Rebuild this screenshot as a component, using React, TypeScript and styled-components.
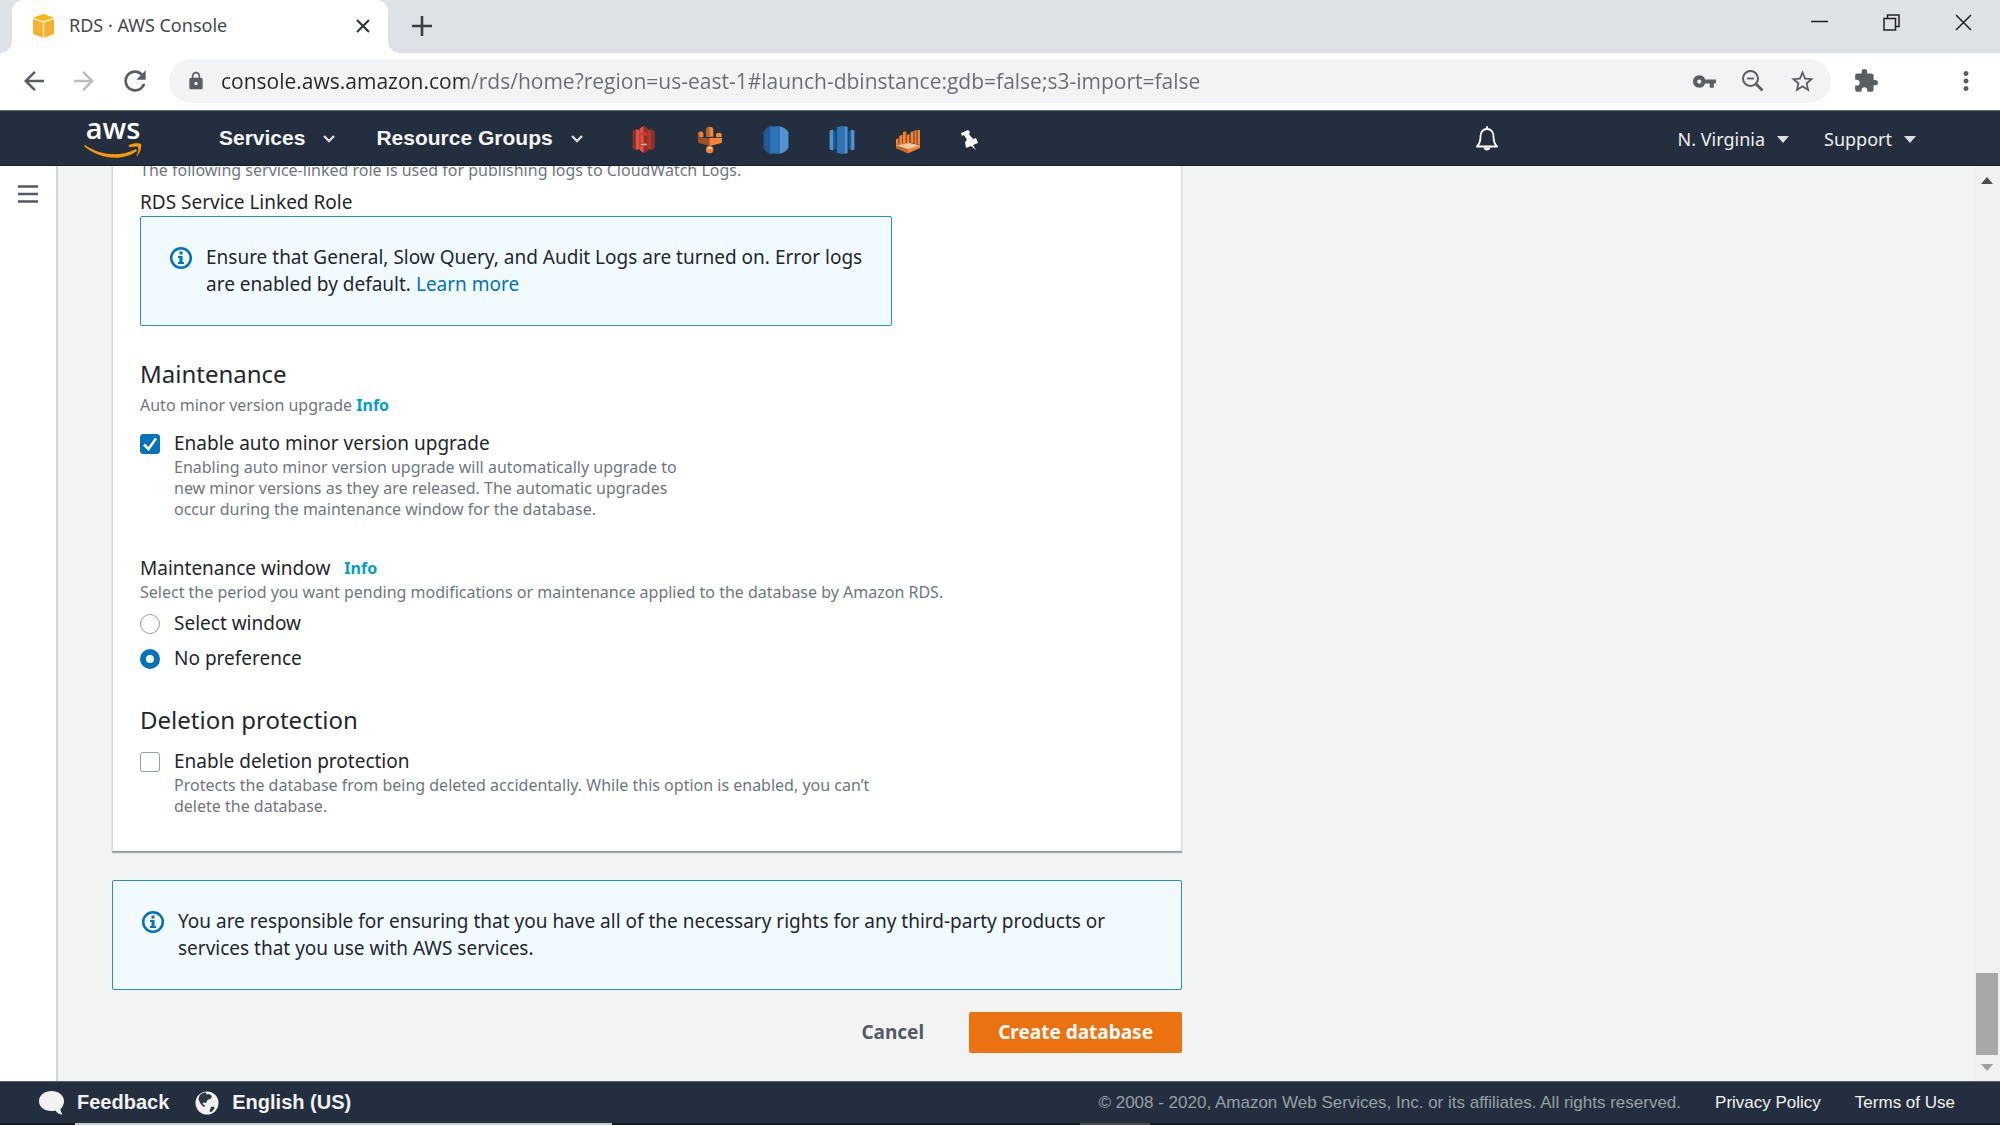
import React, { useState } from "react";
import styled, { createGlobalStyle, css } from "styled-components";
import {
  MdArrowBack,
  MdArrowForward,
  MdExtension,
  MdLock,
  MdMoreVert,
  MdRefresh,
  MdStarBorder,
  MdVpnKey,
} from "react-icons/md";

const ember = `"Noto Sans", "Open Sans", sans-serif`;
const chrome = `"Open Sans", "Noto Sans", sans-serif`;
const arial = `"Liberation Sans", Arial, sans-serif`;

const GlobalStyle = createGlobalStyle`
  *, *::before, *::after { box-sizing: border-box; }
  body {
    margin: 0;
    font-family: ${ember};
    font-size: 19px;
    line-height: 27px;
    color: #24272d;
    background: #f2f3f3;
  }
  h2, p { margin: 0; font-weight: 400; }
  button { border: 0; padding: 0; background: none; font: inherit; color: inherit; cursor: pointer; }
  a { text-decoration: none; color: inherit; }
  svg { display: block; flex: none; }
`;

const Screen = styled.div`
  height: 100vh;
  display: flex;
  flex-direction: column;
  overflow: hidden;
`;

/* ---------- browser chrome ---------- */

const TabStrip = styled.div`
  display: flex;
  align-items: stretch;
  height: 53px;
  padding-left: 12px;
  background: #dee1e6;
  flex: none;
`;

const Tab = styled.div`
  position: relative;
  display: flex;
  align-items: center;
  width: 376px;
  padding: 0 18px 2px 20px;
  gap: 14px;
  border-radius: 12px 12px 0 0;
  background: #fff;
  color: #45494d;
  font-size: 18px;

  &::before,
  &::after {
    content: "";
    position: absolute;
    bottom: 0;
    width: 12px;
    height: 12px;
  }
  &::before {
    right: 100%;
    background: radial-gradient(circle at 0 0, transparent 12px, #fff 12px);
  }
  &::after {
    left: 100%;
    background: radial-gradient(circle at 100% 0, transparent 12px, #fff 12px);
  }
`;

const TabTitle = styled.span`
  flex: 1;
  white-space: nowrap;
`;

const NewTab = styled.button`
  margin-left: 24px;
  padding-bottom: 2px;
`;

const WindowButtons = styled.div`
  display: flex;
  align-items: flex-start;
  gap: 55px;
  margin-left: auto;
  padding: 14px 28px 0 0;
`;

const Toolbar = styled.div`
  display: flex;
  align-items: center;
  height: 57px;
  padding: 0 19px 1px 19px;
  background: #fff;
  color: #5a5e63;
  flex: none;
`;

const ToolButton = styled.button<{ $faded?: boolean }>`
  width: 30px;
  margin-right: 20px;
  color: ${(p) => (p.$faded ? "#bbbdbf" : "inherit")};
`;

const Omnibox = styled.div`
  display: flex;
  align-items: center;
  flex: 1;
  height: 44px;
  margin-right: 22px;
  padding: 0 15px 0 17px;
  border-radius: 22px;
  background: #f1f3f4;
`;

const Address = styled.input`
  flex: 1;
  min-width: 0;
  margin: 0 16px 0 15px;
  padding: 0;
  border: 0;
  outline: 0;
  font-family: ${chrome};
  font-size: 21px;
  line-height: 30px;
  color: transparent;
  background: linear-gradient(to right, #25272b 244px, #696d72 244px);
  -webkit-background-clip: text;
  background-clip: text;
`;

const OmniActions = styled.div`
  display: flex;
  align-items: center;
  gap: 24px;
`;

const MenuButton = styled.button`
  margin-left: 72px;
`;

/* ---------- console navigation ---------- */

const Nav = styled.header`
  display: flex;
  align-items: center;
  height: 56px;
  padding: 0 84px;
  background: #232f3e;
  border-top: 1px solid #67727c;
  border-bottom: 1px solid #16202e;
  color: #fff;
  flex: none;
`;

const NavMenu = styled.button<{ $light?: boolean }>`
  display: flex;
  align-items: center;
  gap: ${(p) => (p.$light ? "12px" : "18px")};
  font-family: ${(p) => (p.$light ? ember : arial)};
  font-size: ${(p) => (p.$light ? "18px" : "21px")};
  font-weight: ${(p) => (p.$light ? 400 : 700)};
  color: ${(p) => (p.$light ? "#eee" : "#f5f5f5")};
  white-space: nowrap;
`;

const MainMenus = styled.nav`
  display: flex;
  gap: 41px;
  margin-left: 77px;
  padding-bottom: 2px;

  svg { margin-top: 4px; }
`;

const Shortcuts = styled.div`
  display: flex;
  align-items: center;
  gap: 40px;
  margin-left: 48px;
  padding-top: 3px;
`;

const Account = styled.div`
  display: flex;
  align-items: center;
  gap: 35px;
  margin-left: 179px;
  padding-top: 3px;
`;

const BellButton = styled.button`
  margin-left: auto;
  padding-top: 2px;
`;

/* ---------- page ---------- */

const Body = styled.div`
  display: flex;
  flex: 1;
  min-height: 0;
`;

const Rail = styled.aside`
  flex: none;
  width: 58px;
  padding: 19px 0 0 18px;
  background: #fff;
  border-right: 2px solid #d2d6d6;
`;

const RailButton = styled.button`
  display: block;
`;

const Main = styled.main`
  display: flex;
  flex-direction: column;
  justify-content: flex-end;
  flex: 1;
  min-width: 0;
  overflow: hidden;
  padding: 0 54px 28px;
`;

const Column = styled.div`
  width: 100%;
  max-width: 1070px;
`;

const Panel = styled.section`
  padding: 28px 27px 34px;
  margin-bottom: 28px;
  background: #fff;
  border: 1px solid #d5dbdb;
  border-bottom-color: #879596;
  box-shadow: 0 1px 1px rgba(0, 28, 36, 0.3);
`;

const Heading = styled.h2`
  font-size: 24px;
  line-height: 32px;
`;

const Hint = styled.p<{ $width?: number }>`
  max-width: ${(p) => (p.$width ? `${p.$width}px` : "none")};
  font-size: 16px;
  line-height: 21px;
  color: #6f777e;
`;

const Stack = styled.div<{ $gap?: number; $top?: number }>`
  display: flex;
  flex-direction: column;
  gap: ${(p) => p.$gap ?? 0}px;
  margin-top: ${(p) => p.$top ?? 0}px;
`;

const InfoLink = styled.button`
  font-size: 16px;
  font-weight: 700;
  line-height: 21px;
  color: #00a1c9;
`;

const FieldTitle = styled.div`
  display: flex;
  align-items: center;
  gap: 14px;
`;

const Choice = styled.div`
  display: grid;
  grid-template-columns: 20px 1fr;
  column-gap: 14px;
  align-items: center;

  ${Hint} { grid-column: 2; }
`;

const control = css`
  appearance: none;
  width: 20px;
  height: 20px;
  margin: 0;
  border: 1px solid #95a0a1;
  background: #fff;
`;

const Checkbox = styled.input`
  ${control}
  border-radius: 3px;
  &:checked {
    border-color: #0073bb;
    background: #0073bb;
  }
`;

const CheckCell = styled.span`
  display: grid;
  > * { grid-area: 1 / 1; }
  svg { pointer-events: none; }
`;

const Radio = styled.input`
  ${control}
  border-radius: 50%;
  &:checked { border: 6px solid #0073bb; }
`;

const AlertBox = styled.div<{ $width?: number }>`
  display: flex;
  align-items: flex-start;
  gap: 13px;
  max-width: ${(p) => (p.$width ? `${p.$width}px` : "none")};
  padding: 27px 28px;
  border: 1px solid #2e8bc7;
  border-radius: 2px;
  background: #f1faff;

  svg { margin-top: 2px; }
  a { color: #0073bb; }
`;

const Actions = styled.div`
  display: flex;
  justify-content: flex-end;
  gap: 16px;
  margin-top: 22px;
`;

const Action = styled.button<{ $primary?: boolean }>`
  height: 41px;
  padding: 0 29px;
  border-radius: 2px;
  font-weight: 700;
  color: ${(p) => (p.$primary ? "#fff" : "#545b64")};
  background: ${(p) => (p.$primary ? "#ec7211" : "transparent")};
`;

const Scrollbar = styled.div`
  display: flex;
  flex-direction: column;
  align-items: center;
  justify-content: space-between;
  flex: none;
  width: 26px;
  padding: 11px 0 10px;
  background: #f1f1f1;
`;

const ThumbEnd = styled.div`
  display: flex;
  flex-direction: column;
  align-items: center;
  gap: 9px;
`;

const Thumb = styled.div`
  width: 22px;
  height: 82px;
  background: #a8a8a8;
`;

/* ---------- footer ---------- */

const Footer = styled.footer`
  display: flex;
  align-items: center;
  flex: none;
  height: 42px;
  padding: 0 45px 0 39px;
  background: #232f3e;
  border-top: 1px solid #56616c;
  font-family: ${arial};
  font-size: 17px;
  color: #f2f2f2;
  white-space: nowrap;
`;

const FooterButton = styled.button`
  display: flex;
  align-items: center;
  gap: 13px;
  margin-right: 26px;
  font-size: 20px;
  font-weight: 700;
`;

const Legal = styled.div`
  display: flex;
  gap: 34px;
  margin-left: auto;
`;

const Copyright = styled.span`
  color: #95a0a6;
`;

const Taskbar = styled.div`
  display: flex;
  flex: none;
  height: 2px;
  padding-left: 75px;
  gap: 468px;
  background: #16191d;
`;

const TaskSegment = styled.div<{ $bright?: boolean }>`
  width: ${(p) => (p.$bright ? "537px" : "70px")};
  background: ${(p) => (p.$bright ? "#c9c9c9" : "#4a4b4e")};
`;

/* ---------- drawings ---------- */

const Favicon = () => (
  <svg width="23" height="24" viewBox="0 0 23 24">
    <path d="M1 4 11.500 0 22 4v16l-10.500 4L1 20z" fill="#f5b32d" />
    <path d="M1 4 11.500 0 22 4 11.500 8z" fill="#f9b813" />
    <path d="M1 4.500 11.500 8 22 4.500M11.500 8v16" stroke="#fdeccb" strokeWidth="1.400" fill="none" />
  </svg>
);

const Strokes = ({ size, d, width = 1.5, color = "#222" }: { size: number; d: string; width?: number; color?: string }) => (
  <svg width={size} height={size} viewBox={`0 0 ${size} ${size}`} fill="none" stroke={color} strokeWidth={width}>
    <path d={d} />
  </svg>
);

const ZoomOutIcon = () => (
  <svg width="24" height="24" viewBox="0 0 24 24" fill="none" stroke="currentColor">
    <circle cx="9.500" cy="9.500" r="7.500" strokeWidth="2" />
    <path d="M15 15l6.500 6.500" strokeWidth="2.800" />
    <path d="M6 9.500h7" strokeWidth="1.800" />
  </svg>
);

const AwsLogo = () => (
  <svg width="58" height="42" viewBox="0 -4 58 42" role="img" aria-label="AWS" overflow="visible">
    <text x="29" y="18" textAnchor="middle" fontFamily="Open Sans" fontSize="29" fontWeight="600" fill="#fff">
      aws
    </text>
    <path d="M1 24c16 11 36 12 51 4l1 2C38 41 15 38 0 25z" fill="#f90" />
    <path d="M45 24c4-2 10-2 12-1 1 3-1 9-4 12-1 0-1 0 0-1 1-3 2-6 1-8-2-1-5 0-8 0-1 0-2-1-1-2z" fill="#f90" />
  </svg>
);

const Chevron = () => (
  <svg width="12" height="8" viewBox="0 0 12 8">
    <path d="M1 1l5 5 5-5" fill="none" stroke="#ddd" strokeWidth="2.400" />
  </svg>
);

const Caret = ({ up, color = "#ddd" }: { up?: boolean; color?: string }) => (
  <svg width="12" height="7" viewBox="0 0 12 7">
    <path d={up ? "M0 7 6 0l6 7z" : "M0 0h12L6 7z"} fill={color} />
  </svg>
);

const Bell = () => (
  <svg width="24" height="26" viewBox="0 0 24 26" fill="none" stroke="#fff" strokeWidth="1.800">
    <path d="M2 20.500h20c-3-3-3.500-5-3.500-10C18.500 6 16 3 12 3s-6.500 3-6.500 7.500c0 5-.5 7-3.500 10z" strokeLinejoin="round" />
    <path d="M12 3V1" strokeLinecap="round" />
    <path d="M8.500 21.500c.5 4 6.500 4 7 0z" fill="#fff" stroke="none" />
  </svg>
);

const BucketIcon = () => (
  <svg width="26" height="28" viewBox="32 47 78 86">
    <path d="M36 62l10-5v64l-10-5z" fill="#8c3123" />
    <path d="M104 62l-10-5v64l10-5z" fill="#8c3123" />
    <path d="M46 57l12 3v58l-12 3z" fill="#e05243" />
    <path d="M94 57l-12 3v58l12 3z" fill="#b0392b" />
    <path d="M58 54l12-6 12 6v68l-12 7-12-7z" fill="#c43d2f" />
    <path d="M58 54l12-6v18l-12 2zM58 110l12-2v21l-12-7z" fill="#e05243" />
    <path d="M70 48l12 6v14l-12-2zM70 108l12 2v12l-12 7z" fill="#8c3123" />
    <path d="M60 76l10-1v24l-10-1z" fill="#e05243" />
    <path d="M70 75l10 1v22l-10 1z" fill="#8c3123" />
    <path d="M58 103l12-2 12 2-12 4z" fill="#f2b0a9" />
  </svg>
);

const MapIcon = () => (
  <svg width="26" height="28" viewBox="228 48 78 84">
    <path d="M231 84h72v14l-37 10-35-10z" fill="#9d5025" />
    <path d="M266 84h37v14l-37 10z" fill="#f58534" />
    <path d="M231 68c4-5 12-5 16 0v14h-16zM285 71c4-4 13-4 17 0v11h-17z" fill="#f58534" />
    <path d="M256 57c4-9 18-9 21 0v23h-21z" fill="#f58534" />
    <path d="M256 57c2-4 5-6 10-7v30h-10zM231 68l5-3v17h-5z" fill="#b8622c" />
    <circle cx="266" cy="119" r="11" fill="#f58534" />
    <path d="M256 114c5-5 15-5 20 0l-10 4z" fill="#fbc79c" />
  </svg>
);

const DatabaseIcon = () => (
  <svg width="26" height="28" viewBox="428 47 78 86">
    <path d="M429 66c5-10 12-16 19-18v84c-9-3-15-9-19-18z" fill="#1f5b98" />
    <path d="M448 48h31v84h-31z" fill="#2e73b8" />
    <path d="M479 48c12 3 20 9 26 18v48c-4 9-14 15-26 18z" fill="#5294cf" />
  </svg>
);

const TableIcon = () => (
  <svg width="26" height="28" viewBox="625 47 78 86">
    <path d="M626 61l11-3v64l-11-3z" fill="#5294cf" />
    <path d="M637 60l8 2v56l-8 2z" fill="#205b99" />
    <path d="M648 50l14-2h11v84h-11l-14-2z" fill="#2e73b8" />
    <path d="M673 48l8 2v80l-8 2z" fill="#5294cf" />
    <path d="M684 62l8-2v60l-8-2z" fill="#205b99" />
    <path d="M692 58l10 3v58l-10 3z" fill="#5294cf" />
  </svg>
);

const StreamIcon = () => (
  <svg width="26" height="28" viewBox="828 50 78 84">
    <path d="M831 110l36 14v8l-36-16z" fill="#9d5025" />
    <path d="M831 108l36-6 36 6v8l-36 16-36-16z" fill="#f58534" />
    <path d="M831 108l36 12v12l-36-16z" fill="#c26a2e" />
    <path d="M831 108l36-8 36 8-36 11z" fill="#fbc79c" />
    <path d="M831 90l8-3v19l-8 1zM841 79l9-3v29l-9 2zM852 69l9-3v37l-9 2zM863 77l9-3v28h-9zM875 68l9-3v38l-9-2zM886 64l7-2v43l-7-2zM895 63l8-2v46l-8-2z" fill="#f58534" />
    <path d="M838 87h3v19h-3zM849 76h3v29h-3zM860 66h3v36h-3zM871 74h4v27h-4zM883 65h3v38h-3zM893 62h2v43h-2z" fill="#9d5025" />
  </svg>
);

const PinIcon = () => (
  <svg width="18" height="20" viewBox="0 0 18 20">
    <path d="M0 3 7 0l2 2-1 2 4 5 3-1 2 5-5 2 3 5-5-4-5 2-1-6 2-2-3-5-2 1z" fill="#fff" />
  </svg>
);

const InfoIcon = () => (
  <svg width="24" height="24" viewBox="0 0 24 24">
    <circle cx="12" cy="12" r="9.800" fill="none" stroke="#0073bb" strokeWidth="2.500" />
    <path d="M10.500 5.500h3v3h-3zM9 10h4.500v6H15v2H9v-2h1.500v-4H9z" fill="#0073bb" />
  </svg>
);

const SpeechIcon = () => (
  <svg width="25" height="24" viewBox="0 0 25 24">
    <path d="M12.500 0C19 0 25 4 25 10c0 4-2 6.500-3.500 8 0 2 1 4 2 5.500-3 0-5.500-1.500-7-4C8 21.500 0 17.500 0 10 0 4 6 0 12.500 0z" fill="#f2f2f2" />
  </svg>
);

const GlobeIcon = () => (
  <svg width="24" height="24" viewBox="0 0 24 24">
    <circle cx="12" cy="12" r="11.500" fill="#f2f2f2" />
    <path d="M4.500 4.500C7 2 9 1.500 11 1.500l.5 2 2.500-.5 3 2-1 2.500-3.500 1.500-1.500 3-2.500-.5-1 1.500 2 1 .5 2-2-.5-3-3.500L3.500 8zM16 16l3-.5.5 2-3 3.500-2-.5z" fill="#2f3946" />
  </svg>
);

const MenuIcon = () => (
  <svg width="20" height="18" viewBox="0 0 20 18">
    <path d="M0 1.500h20M0 9h20M0 16.500h20" stroke="#545b64" strokeWidth="2.600" />
  </svg>
);

/* ---------- composition ---------- */

function CheckOption({ id, label, checked, onToggle, hint, width }: {
  id: string; label: string; checked: boolean; onToggle: () => void; hint: string; width: number;
}) {
  return (
    <Choice>
      <CheckCell>
        <Checkbox id={id} type="checkbox" checked={checked} onChange={onToggle} />
        {checked && <Strokes size={20} d="M4 10.500 8.500 15 16 4.500" width={2.6} color="#fff" />}
      </CheckCell>
      <label htmlFor={id}>{label}</label>
      <Hint $width={width}>{hint}</Hint>
    </Choice>
  );
}

export default function App() {
  const [autoUpgrade, setAutoUpgrade] = useState(true);
  const [protect, setProtect] = useState(false);
  const [period, setPeriod] = useState("none");
  const [url, setUrl] = useState(
    "console.aws.amazon.com/rds/home?region=us-east-1#launch-dbinstance:gdb=false;s3-import=false"
  );

  return (
    <Screen>
      <GlobalStyle />
      <TabStrip>
        <Tab>
          <Favicon />
          <TabTitle>RDS · AWS Console</TabTitle>
          <button aria-label="Close tab"><Strokes size={14} d="M1 1l12 12M13 1 1 13" width={2.2} color="#33373b" /></button>
        </Tab>
        <NewTab aria-label="New tab"><Strokes size={20} d="M10 0v20M0 10h20" width={2.6} color="#3b3f43" /></NewTab>
        <WindowButtons>
          <button aria-label="Minimize"><Strokes size={17} d="M0 7.500h17" /></button>
          <button aria-label="Restore"><Strokes size={17} d="M1 4.500h11.500V16H1zM4.500 4.500V1H16v11.500h-3.500" /></button>
          <button aria-label="Close window"><Strokes size={17} d="M1 1l15 15M16 1 1 16" /></button>
        </WindowButtons>
      </TabStrip>

      <Toolbar>
        <ToolButton aria-label="Back"><MdArrowBack size={30} /></ToolButton>
        <ToolButton aria-label="Forward" $faded><MdArrowForward size={30} /></ToolButton>
        <ToolButton aria-label="Reload"><MdRefresh size={32} /></ToolButton>
        <Omnibox>
          <MdLock size={20} />
          <Address aria-label="Address" value={url} onChange={(e) => setUrl(e.target.value)} spellCheck={false} />
          <OmniActions>
            <button aria-label="Passwords"><MdVpnKey size={25} /></button>
            <button aria-label="Zoom"><ZoomOutIcon /></button>
            <button aria-label="Bookmark"><MdStarBorder size={27} /></button>
          </OmniActions>
        </Omnibox>
        <button aria-label="Extensions"><MdExtension size={26} /></button>
        <MenuButton aria-label="Browser menu"><MdMoreVert size={30} /></MenuButton>
      </Toolbar>

      <Nav>
        <a href="#home"><AwsLogo /></a>
        <MainMenus>
          <NavMenu>Services <Chevron /></NavMenu>
          <NavMenu>Resource Groups <Chevron /></NavMenu>
        </MainMenus>
        <Shortcuts>
          <a href="#s3" aria-label="S3"><BucketIcon /></a>
          <a href="#emr" aria-label="EMR"><MapIcon /></a>
          <a href="#rds" aria-label="RDS"><DatabaseIcon /></a>
          <a href="#redshift" aria-label="Redshift"><TableIcon /></a>
          <a href="#kinesis" aria-label="Kinesis"><StreamIcon /></a>
          <button aria-label="Pin shortcuts"><PinIcon /></button>
        </Shortcuts>
        <BellButton aria-label="Notifications"><Bell /></BellButton>
        <Account>
          <NavMenu $light>N. Virginia <Caret /></NavMenu>
          <NavMenu $light>Support <Caret /></NavMenu>
        </Account>
      </Nav>

      <Body>
        <Rail><RailButton aria-label="Open navigation"><MenuIcon /></RailButton></Rail>
        <Main>
          <Column>
            <Panel>
              <Hint>The following service-linked role is used for publishing logs to CloudWatch Logs.</Hint>
              <Stack $top={8}>
                <span>RDS Service Linked Role</span>
                <AlertBox $width={752}>
                  <InfoIcon />
                  <p>
                    Ensure that General, Slow Query, and Audit Logs are turned on. Error logs are enabled by default.{" "}
                    <a href="#learn-more">Learn more</a>
                  </p>
                </AlertBox>
              </Stack>

              <Stack $top={32} $gap={5}>
                <Heading>Maintenance</Heading>
                <Hint>Auto minor version upgrade <InfoLink>Info</InfoLink></Hint>
              </Stack>
              <Stack $top={14}>
                <CheckOption
                  id="auto-upgrade"
                  label="Enable auto minor version upgrade"
                  checked={autoUpgrade}
                  onToggle={() => setAutoUpgrade(!autoUpgrade)}
                  hint="Enabling auto minor version upgrade will automatically upgrade to new minor versions as they are released. The automatic upgrades occur during the maintenance window for the database."
                  width={535}
                />
              </Stack>

              <Stack $top={35}>
                <FieldTitle>
                  <span>Maintenance window</span>
                  <InfoLink>Info</InfoLink>
                </FieldTitle>
                <Hint>Select the period you want pending modifications or maintenance applied to the database by Amazon RDS.</Hint>
              </Stack>
              <Stack $top={7} $gap={8}>
                <Choice>
                  <Radio id="window-select" type="radio" name="window" checked={period === "select"} onChange={() => setPeriod("select")} />
                  <label htmlFor="window-select">Select window</label>
                </Choice>
                <Choice>
                  <Radio id="window-none" type="radio" name="window" checked={period === "none"} onChange={() => setPeriod("none")} />
                  <label htmlFor="window-none">No preference</label>
                </Choice>
              </Stack>

              <Stack $top={32} $gap={12}>
                <Heading>Deletion protection</Heading>
                <CheckOption
                  id="deletion-protection"
                  label="Enable deletion protection"
                  checked={protect}
                  onToggle={() => setProtect(!protect)}
                  hint="Protects the database from being deleted accidentally. While this option is enabled, you can’t delete the database."
                  width={740}
                />
              </Stack>
            </Panel>

            <AlertBox>
              <InfoIcon />
              <p>
                You are responsible for ensuring that you have all of the necessary rights for any third-party products or
                services that you use with AWS services.
              </p>
            </AlertBox>
            <Actions>
              <Action>Cancel</Action>
              <Action $primary>Create database</Action>
            </Actions>
          </Column>
        </Main>
        <Scrollbar aria-hidden="true">
          <Caret up color="#4d4d4d" />
          <ThumbEnd>
            <Thumb />
            <Caret color="#a0a0a0" />
          </ThumbEnd>
        </Scrollbar>
      </Body>

      <Footer>
        <FooterButton><SpeechIcon /> Feedback</FooterButton>
        <FooterButton><GlobeIcon /> English (US)</FooterButton>
        <Legal>
          <Copyright>© 2008 - 2020, Amazon Web Services, Inc. or its affiliates. All rights reserved.</Copyright>
          <a href="#privacy">Privacy Policy</a>
          <a href="#terms">Terms of Use</a>
        </Legal>
      </Footer>
      <Taskbar>
        <TaskSegment $bright />
        <TaskSegment />
      </Taskbar>
    </Screen>
  );
}
